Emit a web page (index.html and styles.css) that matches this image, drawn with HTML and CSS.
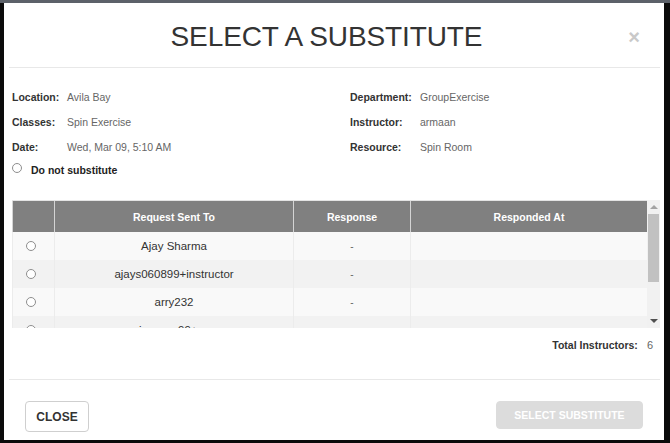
FILE: index.html
```html
<!DOCTYPE html>
<html>
<head>
<meta charset="utf-8">
<title>Select a Substitute</title>
<link rel="stylesheet" href="styles.css">
</head>
<body>
<div class="modal">
  <div class="modal-header">
    <h1 class="title">SELECT A SUBSTITUTE</h1>
    <span class="close-x">&times;</span>
  </div>
  <div class="info">
    <div class="info-col">
      <div class="info-row"><span class="lbl">Location:</span><span class="val">Avila Bay</span></div>
      <div class="info-row"><span class="lbl">Classes:</span><span class="val">Spin Exercise</span></div>
      <div class="info-row"><span class="lbl">Date:</span><span class="val">Wed, Mar 09, 5:10 AM</span></div>
      <label class="dns"><input type="radio" class="radio" name="sub">Do not substitute</label>
    </div>
    <div class="info-col right">
      <div class="info-row"><span class="lbl">Department:</span><span class="val">GroupExercise</span></div>
      <div class="info-row"><span class="lbl">Instructor:</span><span class="val">armaan</span></div>
      <div class="info-row"><span class="lbl">Resource:</span><span class="val">Spin Room</span></div>
    </div>
  </div>
  <div class="table-wrap">
    <div class="table-view">
      <table class="grid">
        <colgroup>
          <col class="c-sel"><col class="c-name"><col class="c-resp"><col>
        </colgroup>
        <thead>
          <tr><th></th><th>Request Sent To</th><th>Response</th><th>Responded At</th></tr>
        </thead>
        <tbody>
          <tr><td class="sel"><input type="radio" class="radio" name="sub"></td><td>Ajay Sharma</td><td class="dash">-</td><td></td></tr>
          <tr><td class="sel"><input type="radio" class="radio" name="sub"></td><td>ajays060899+instructor</td><td class="dash">-</td><td></td></tr>
          <tr><td class="sel"><input type="radio" class="radio" name="sub"></td><td>arry232</td><td class="dash">-</td><td></td></tr>
          <tr><td class="sel"><input type="radio" class="radio" name="sub"></td><td>ajaycoco99+cac</td><td class="dash">-</td><td></td></tr>
          <tr><td class="sel"><input type="radio" class="radio" name="sub"></td><td>ajays060899+staff</td><td class="dash">-</td><td></td></tr>
          <tr><td class="sel"><input type="radio" class="radio" name="sub"></td><td>armaan</td><td class="dash">-</td><td></td></tr>
        </tbody>
      </table>
    </div>
    <div class="vscroll">
      <div class="sb-btn"><span class="arrow up"></span></div>
      <div class="sb-thumb"></div>
      <div class="sb-track"></div>
      <div class="sb-btn"><span class="arrow down"></span></div>
    </div>
  </div>
  <div class="total"><span class="lbl">Total Instructors:</span><span class="val">6</span></div>
  <div class="footer">
    <button class="btn btn-close">CLOSE</button>
    <button class="btn btn-select" disabled>SELECT SUBSTITUTE</button>
  </div>
</div>
</body>
</html>
```
FILE: styles.css
```css
html, body {
  margin: 0;
  padding: 0;
}
body {
  background: #0b0b0b;
  border-top: 3px solid #5c6169;
  font-family: "Liberation Sans", Arial, sans-serif;
  color: #333;
}
.modal {
  margin: 0 6px 0 4px;
  height: 437px;
  background: #fff;
  display: flex;
  flex-direction: column;
}
.modal-header {
  height: 65px;
  box-sizing: border-box;
  margin: 0 4px 0 5px;
  padding: 3px 18px 0 18px;
  border-bottom: 1px solid #e8e8e8;
  display: flex;
  align-items: center;
  flex: none;
}
.title {
  flex: 1;
  margin: 0;
  text-align: center;
  font-size: 28px;
  font-weight: normal;
  color: #333;
  letter-spacing: -0.1px;
}
.close-x {
  width: 16px;
  text-align: center;
  font-size: 20px;
  font-weight: bold;
  color: #c9c9c9;
  line-height: 20px;
}
.info {
  display: grid;
  grid-template-columns: 338px 1fr;
  padding: 16px 0 0 8px;
  flex: none;
}
.info-row {
  display: flex;
  align-items: center;
  height: 25px;
  font-size: 10.5px;
}
.lbl {
  font-weight: bold;
  color: #333;
  font-size: 10.5px;
}
.val {
  color: #666;
  font-size: 10.5px;
}
.info-col .lbl {
  width: 55px;
  flex: none;
}
.info-col.right .lbl {
  width: 70px;
}
.dns {
  display: flex;
  align-items: center;
  height: 21px;
  font-size: 10.5px;
  font-weight: bold;
  color: #222;
}
.radio {
  -webkit-appearance: none;
  appearance: none;
  width: 10px;
  height: 10px;
  margin: 0;
  border: 1px solid #8e8e8e;
  border-radius: 50%;
  background: #fff;
  flex: none;
}
.dns .radio {
  margin: -3px 9px 0 0;
}
.table-wrap {
  margin: 20px 4px 0 8px;
  height: 128px;
  display: flex;
  flex: none;
}
.table-view {
  flex: 1;
  overflow: hidden;
}
.vscroll {
  width: 13px;
  flex: none;
  display: flex;
  flex-direction: column;
  background: #f1f1f1;
}
.sb-btn {
  height: 14px;
  display: flex;
  align-items: center;
  justify-content: center;
  flex: none;
}
.arrow {
  width: 0;
  height: 0;
  border-left: 4px solid transparent;
  border-right: 4px solid transparent;
}
.arrow.up {
  border-bottom: 4px solid #a3a3a3;
}
.arrow.down {
  border-top: 4px solid #505050;
}
.sb-thumb {
  height: 68px;
  margin: 0 1px;
  background: #c1c1c1;
  flex: none;
}
.sb-track {
  flex: 1;
}
.grid {
  width: 100%;
  table-layout: fixed;
  border-collapse: collapse;
}
.c-sel { width: 42px; }
.c-name { width: 239px; }
.c-resp { width: 117px; }
.grid th {
  height: 31px;
  padding: 0;
  background: #808080;
  color: #fff;
  font-size: 10.5px;
  font-weight: bold;
  text-align: center;
  border-left: 1px solid #d4d4d4;
  border-top: 1px solid #e4e4e4;
}
.grid td {
  height: 28px;
  padding: 0;
  text-align: center;
  font-size: 11.5px;
  color: #333;
  border-left: 1px solid #ececec;
}
.grid tbody tr:nth-child(odd) td { background: #f9f9f9; }
.grid tbody tr:nth-child(even) td { background: #f2f2f2; }
.grid td.sel {
  text-align: left;
  padding-left: 13px;
}
.grid td.sel .radio {
  display: block;
}
.grid td.dash {
  color: #666;
  font-size: 10px;
}
.total {
  display: flex;
  justify-content: flex-end;
  align-items: center;
  gap: 9px;
  height: 20px;
  margin: 7px 11px 0 0;
  flex: none;
}
.total .val {
  color: #666;
  font-size: 11px;
}
.footer {
  margin: 24px 4px 0 5px;
  border-top: 1px solid #e8e8e8;
  padding: 21px 17px 0 16px;
  display: flex;
  justify-content: space-between;
  align-items: flex-start;
  flex: none;
}
.btn {
  font-family: "Liberation Sans", Arial, sans-serif;
  font-weight: bold;
  border-radius: 4px;
  padding: 0;
  cursor: pointer;
}
.btn-close {
  width: 64px;
  height: 31px;
  background: #fff;
  border: 1px solid #cfcfcf;
  color: #333;
  font-size: 12px;
}
.btn-select {
  width: 147px;
  height: 28px;
  background: #dcdcdc;
  border: 1px solid #dcdcdc;
  color: #fff;
  font-size: 10.5px;
}
```
